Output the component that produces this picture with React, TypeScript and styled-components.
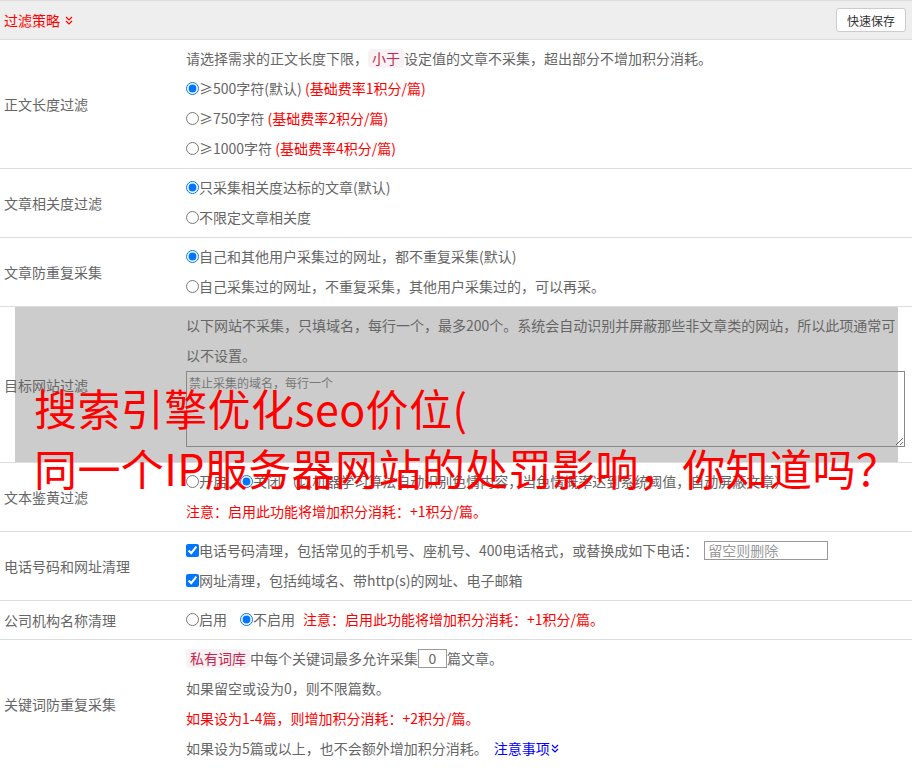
import React from "react";
import styled, { createGlobalStyle } from "styled-components";

const GlobalStyle = createGlobalStyle`
  html, body { margin: 0; padding: 0; background: #fff; }
  body {
    font-family: "Noto Sans CJK SC", "Noto Sans", sans-serif;
    font-size: 14px;
    color: #666;
  }
`;

const Page = styled.div`
  position: relative;
  width: 100%;
  overflow: hidden;
`;

const Header = styled.div`
  display: flex;
  align-items: center;
  justify-content: space-between;
  height: 38px;
  background: #eee;
  border-top: 1px solid #ddd;
  border-bottom: 1px solid #ddd;
  padding: 0 6px 0 4px;
`;

const Title = styled.div`
  display: flex;
  align-items: center;
  gap: 5px;
  color: #f00;
  font-size: 14px;
`;

const SaveButton = styled.button`
  height: 24px;
  width: 70px;
  padding: 0;
  background: #fff;
  border: 1px solid #ccc;
  border-radius: 3px;
  font-family: inherit;
  font-size: 12px;
  color: #333;
`;

const Row = styled.div<{ $shaded?: boolean }>`
  display: grid;
  grid-template-columns: 186px 1fr;
  border-bottom: 1px solid #ddd;
  background: ${(p) =>
    p.$shaded
      ? "linear-gradient(to right, #fff 15px, #ccc 15px, #ccc 898px, #fff 898px)"
      : "#fff"};
`;

const Label = styled.div`
  align-self: center;
  padding-left: 4px;
  color: #666;
  white-space: nowrap;
`;

const Content = styled.div`
  padding: 3px 7px 5px 0;
`;

const Line = styled.div`
  line-height: 30px;
  white-space: nowrap;
  display: flex;
  align-items: center;
`;

const Option = styled.label<{ $gap?: number }>`
  display: inline-flex;
  align-items: center;
  margin-right: ${(p) => p.$gap ?? 0}px;
`;

const Radio = styled.input.attrs({ type: "radio" })`
  width: 13px;
  height: 13px;
  margin: 0;
`;

const Check = styled.input.attrs({ type: "checkbox" })`
  width: 13px;
  height: 13px;
  margin: 0;
`;

const Red = styled.span`
  color: #f00;
  white-space: pre;
`;

const Blue = styled.span`
  color: #00f;
  display: inline-flex;
  align-items: center;
  gap: 1px;
  margin-left: 6px;
`;

const Code = styled.span`
  display: inline-block;
  line-height: 15px;
  padding: 2px 4px;
  border-radius: 4px;
  background: #f9f2f4;
  color: #c7254e;
`;

const TextArea = styled.textarea`
  display: block;
  box-sizing: border-box;
  width: 100%;
  height: 76px;
  margin: 1px 0 10px;
  padding: 2px 2px;
  background: transparent;
  border: 1px solid #888;
  font-family: inherit;
  font-size: 12px;
  color: #666;
  resize: both;
  &::placeholder { color: #777; }
`;

const TextInput = styled.input<{ $w: number; $ml?: number }>`
  box-sizing: border-box;
  width: ${(p) => p.$w}px;
  height: 19px;
  margin: 0 0 0 ${(p) => p.$ml ?? 0}px;
  padding: 0 3px;
  border: 1px solid #999;
  font-family: inherit;
  font-size: 14px;
  color: #666;
  text-align: ${(p) => (p.$w < 40 ? "center" : "left")};
  &::placeholder { color: #999; }
`;

const Overlay = styled.div`
  position: absolute;
  left: 34px;
  top: 377px;
  color: #f00;
  font-size: 43px;
  letter-spacing: 0.4px;
  line-height: 60px;
  white-space: nowrap;
  pointer-events: none;
`;

const Chevrons = ({ color }: { color: string }) => (
  <svg width="8" height="9" viewBox="0 0 8 9" fill="none" stroke={color} strokeWidth="1.2">
    <polyline points="1,1 4,4 7,1" />
    <polyline points="1,5 4,8 7,5" />
  </svg>
);

export default function App() {
  return (
    <Page>
      <GlobalStyle />
      <Header>
        <Title>
          过滤策略 <Chevrons color="#f00" />
        </Title>
        <SaveButton>快速保存</SaveButton>
      </Header>

      <Row>
        <Label>正文长度过滤</Label>
        <Content>
          <Line>
            请选择需求的正文长度下限，<Code>小于</Code>设定值的文章不采集，超出部分不增加积分消耗。
          </Line>
          <Line>
            <Option>
              <Radio name="len" defaultChecked />≥500字符(默认)<Red> (基础费率1积分/篇)</Red>
            </Option>
          </Line>
          <Line>
            <Option>
              <Radio name="len" />≥750字符<Red> (基础费率2积分/篇)</Red>
            </Option>
          </Line>
          <Line>
            <Option>
              <Radio name="len" />≥1000字符<Red> (基础费率4积分/篇)</Red>
            </Option>
          </Line>
        </Content>
      </Row>

      <Row>
        <Label>文章相关度过滤</Label>
        <Content>
          <Line>
            <Option>
              <Radio name="rel" defaultChecked />只采集相关度达标的文章(默认)
            </Option>
          </Line>
          <Line>
            <Option>
              <Radio name="rel" />不限定文章相关度
            </Option>
          </Line>
        </Content>
      </Row>

      <Row>
        <Label>文章防重复采集</Label>
        <Content>
          <Line>
            <Option>
              <Radio name="dup" defaultChecked />自己和其他用户采集过的网址，都不重复采集(默认)
            </Option>
          </Line>
          <Line>
            <Option>
              <Radio name="dup" />自己采集过的网址，不重复采集，其他用户采集过的，可以再采。
            </Option>
          </Line>
        </Content>
      </Row>

      <Row $shaded>
        <Label>目标网站过滤</Label>
        <Content>
          <Line>
            以下网站不采集，只填域名，每行一个，最多200个。系统会自动识别并屏蔽那些非文章类的网站，所以此项通常可
          </Line>
          <Line>以不设置。</Line>
          <TextArea placeholder="禁止采集的域名，每行一个" />
        </Content>
      </Row>

      <Row>
        <Label>文本鉴黄过滤</Label>
        <Content>
          <Line>
            <Option $gap={13}>
              <Radio name="porn" />开启
            </Option>
            <Option>
              <Radio name="porn" defaultChecked />关闭
            </Option>
            &nbsp;（以机器学习算法自动识别色情内容，当色情概率达到系统阈值，自动屏蔽文章）
          </Line>
          <Line>
            <Red>注意：启用此功能将增加积分消耗：+1积分/篇。</Red>
          </Line>
        </Content>
      </Row>

      <Row>
        <Label>电话号码和网址清理</Label>
        <Content>
          <Line>
            <Option>
              <Check defaultChecked />电话号码清理，包括常见的手机号、座机号、400电话格式，或替换成如下电话：
            </Option>
            <TextInput $w={124} $ml={6} placeholder="留空则删除" />
          </Line>
          <Line>
            <Option>
              <Check defaultChecked />网址清理，包括纯域名、带http(s)的网址、电子邮箱
            </Option>
          </Line>
        </Content>
      </Row>

      <Row>
        <Label>公司机构名称清理</Label>
        <Content>
          <Line>
            <Option $gap={13}>
              <Radio name="org" />启用
            </Option>
            <Option $gap={8}>
              <Radio name="org" defaultChecked />不启用
            </Option>
            <Red>注意：启用此功能将增加积分消耗：+1积分/篇。</Red>
          </Line>
        </Content>
      </Row>

      <Row>
        <Label>关键词防重复采集</Label>
        <Content>
          <Line>
            <Code>私有词库</Code>中每个关键词最多允许采集<TextInput $w={29} defaultValue="0" />篇文章。
          </Line>
          <Line>如果留空或设为0，则不限篇数。</Line>
          <Line>
            <Red>如果设为1-4篇，则增加积分消耗：+2积分/篇。</Red>
          </Line>
          <Line>
            如果设为5篇或以上，也不会额外增加积分消耗。
            <Blue>
              注意事项<Chevrons color="#00f" />
            </Blue>
          </Line>
        </Content>
      </Row>

      <Overlay>
        搜索引擎优化seo价位(
        <br />
        同一个IP服务器网站的处罚影响，你知道吗？
      </Overlay>
    </Page>
  );
}
